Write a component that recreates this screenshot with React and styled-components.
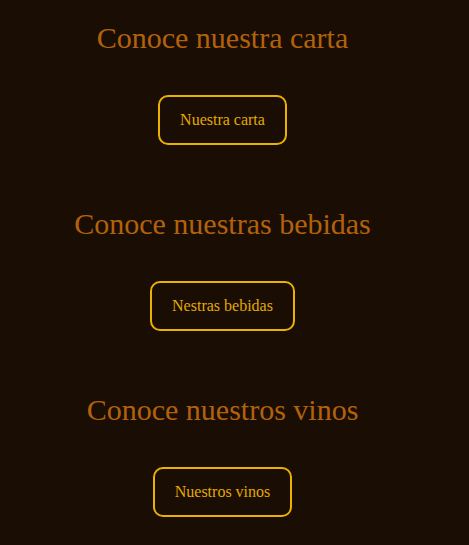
import styled, { createGlobalStyle } from 'styled-components'

const GlobalStyle = createGlobalStyle`
  html, body {
    margin: 0;
    background: #1a0d03;
  }
  body {
    font-family: "Liberation Serif", "Times New Roman", serif;
  }
`

const SECTIONS = [
  { title: 'Conoce nuestra carta', label: 'Nuestra carta' },
  { title: 'Conoce nuestras bebidas', label: 'Nestras bebidas' },
  { title: 'Conoce nuestros vinos', label: 'Nuestros vinos' },
]

const Page = styled.main`
  width: 445px;
  min-height: 545px;
  padding-top: 21px;
  box-sizing: border-box;
  display: flex;
  flex-direction: column;
  gap: 62px;
`

const Section = styled.section`
  display: flex;
  flex-direction: column;
  align-items: center;
  gap: 40px;
`

const Title = styled.h2`
  margin: 0;
  font-size: 30px;
  font-weight: normal;
  line-height: 34px;
  color: #b2620b;
`

const Button = styled.button`
  font-family: inherit;
  font-size: 16px;
  line-height: 18px;
  padding: 14px 20px;
  background: transparent;
  color: #e4a900;
  border: 2px solid #ecb000;
  border-radius: 10px;
  cursor: pointer;
`

const App = () => (
  <>
    <GlobalStyle />
    <Page>
      {SECTIONS.map(({ title, label }) => (
        <Section key={title}>
          <Title>{title}</Title>
          <Button>{label}</Button>
        </Section>
      ))}
    </Page>
  </>
)

export default App
